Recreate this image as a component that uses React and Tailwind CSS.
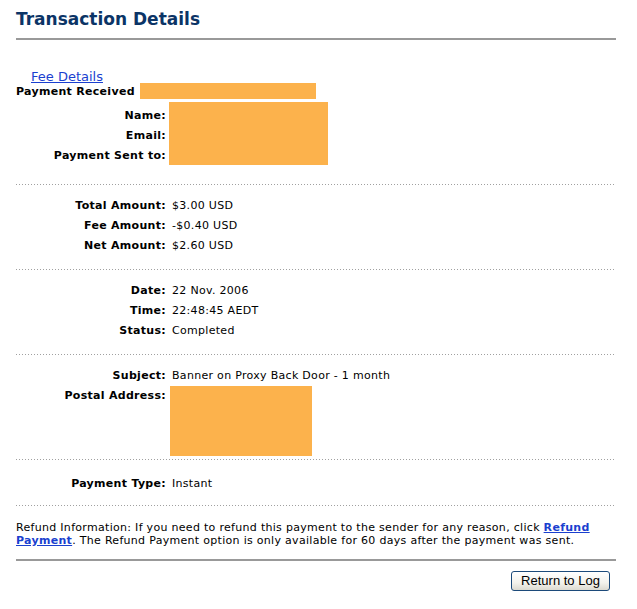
import React from "react";

const Dots = () => (
  <div className="h-px w-[600px] bg-[image:linear-gradient(to_right,#a0a0a0_1px,transparent_1px)] bg-[length:3px_1px] bg-repeat-x" />
);

const Row = ({ label, value }) => (
  <div className="flex h-[20px] leading-[20px]">
    <div className="w-[150px] shrink-0 text-right font-bold whitespace-nowrap">{label}</div>
    <div className="pl-[6px] whitespace-nowrap">{value}</div>
  </div>
);

export default function App() {
  return (
    <div className="w-[637px] h-[609px] bg-white text-black font-['DejaVu_Sans',Verdana,sans-serif] text-[11px] tracking-[0.3px] overflow-hidden">
      <div className="ml-4 w-[600px] flex flex-col">
        <h1 className="mt-[9px] h-[20px] leading-[20px] text-[17px] font-bold tracking-normal text-[#0b3466]">
          Transaction Details
        </h1>
        <div className="mt-[9px] h-[2px] bg-[#999999]" />

        <div className="mt-[29px] h-[14px] pl-[15px] text-[13px] leading-[15px] tracking-normal">
          <a href="#" className="text-[#1a3fcf] underline">Fee Details</a>
        </div>

        <div className="flex h-[16px] items-start">
          <div className="w-[124px] shrink-0 font-bold whitespace-nowrap leading-[18px]">Payment Received</div>
          <div className="w-[176px] h-[16px] bg-[#fcb24c]" />
        </div>

        <div className="mt-[3px] flex items-start">
          <div className="w-[150px] shrink-0 pt-[4px] flex flex-col text-right font-bold whitespace-nowrap">
            <div className="h-[20px] leading-[20px]">Name:</div>
            <div className="h-[20px] leading-[20px]">Email:</div>
            <div className="h-[20px] leading-[20px]">Payment Sent to:</div>
          </div>
          <div className="ml-[3px] w-[159px] h-[63px] bg-[#fcb24c]" />
        </div>

        <div className="mt-[18px]"><Dots /></div>
        <div className="pt-[11px] pb-[13px]">
          <Row label="Total Amount:" value="$3.00 USD" />
          <Row label="Fee Amount:" value="-$0.40 USD" />
          <Row label="Net Amount:" value="$2.60 USD" />
        </div>

        <Dots />
        <div className="pt-[11px] pb-[13px]">
          <Row label="Date:" value="22 Nov. 2006" />
          <Row label="Time:" value="22:48:45 AEDT" />
          <Row label="Status:" value="Completed" />
        </div>

        <Dots />
        <div className="pt-[11px] pb-[3px]">
          <Row label="Subject:" value="Banner on Proxy Back Door - 1 month" />
          <div className="flex items-start">
            <div className="w-[150px] shrink-0 text-right font-bold whitespace-nowrap h-[20px] leading-[20px]">Postal Address:</div>
            <div className="ml-[4px] w-[142px] h-[70px] bg-[#fcb24c]" />
          </div>
        </div>

        <Dots />
        <div className="pt-[14px] pb-[11px]">
          <Row label="Payment Type:" value="Instant" />
        </div>

        <Dots />
        <p className="pt-[15px] leading-[13px] whitespace-nowrap">
          Refund Information: If you need to refund this payment to the sender for any reason, click{" "}
          <a href="#" className="font-bold text-[#1a3fcf] underline">Refund<br />Payment</a>
          . The Refund Payment option is only available for 60 days after the payment was sent.
        </p>

        <div className="mt-[12px] h-[2px] bg-[#999999]" />

        <div className="mt-[10px] flex justify-end pr-[6px]">
          <button className="w-[99px] h-[20px] rounded-[3px] border border-[#1c4a7a] bg-[linear-gradient(to_bottom,#ffffff,#f3f2ec_60%,#dcdad0)] font-['Liberation_Sans',Arial,sans-serif] text-[13px] leading-[18px] tracking-normal text-black">
            Return to Log
          </button>
        </div>
      </div>
    </div>
  );
}
